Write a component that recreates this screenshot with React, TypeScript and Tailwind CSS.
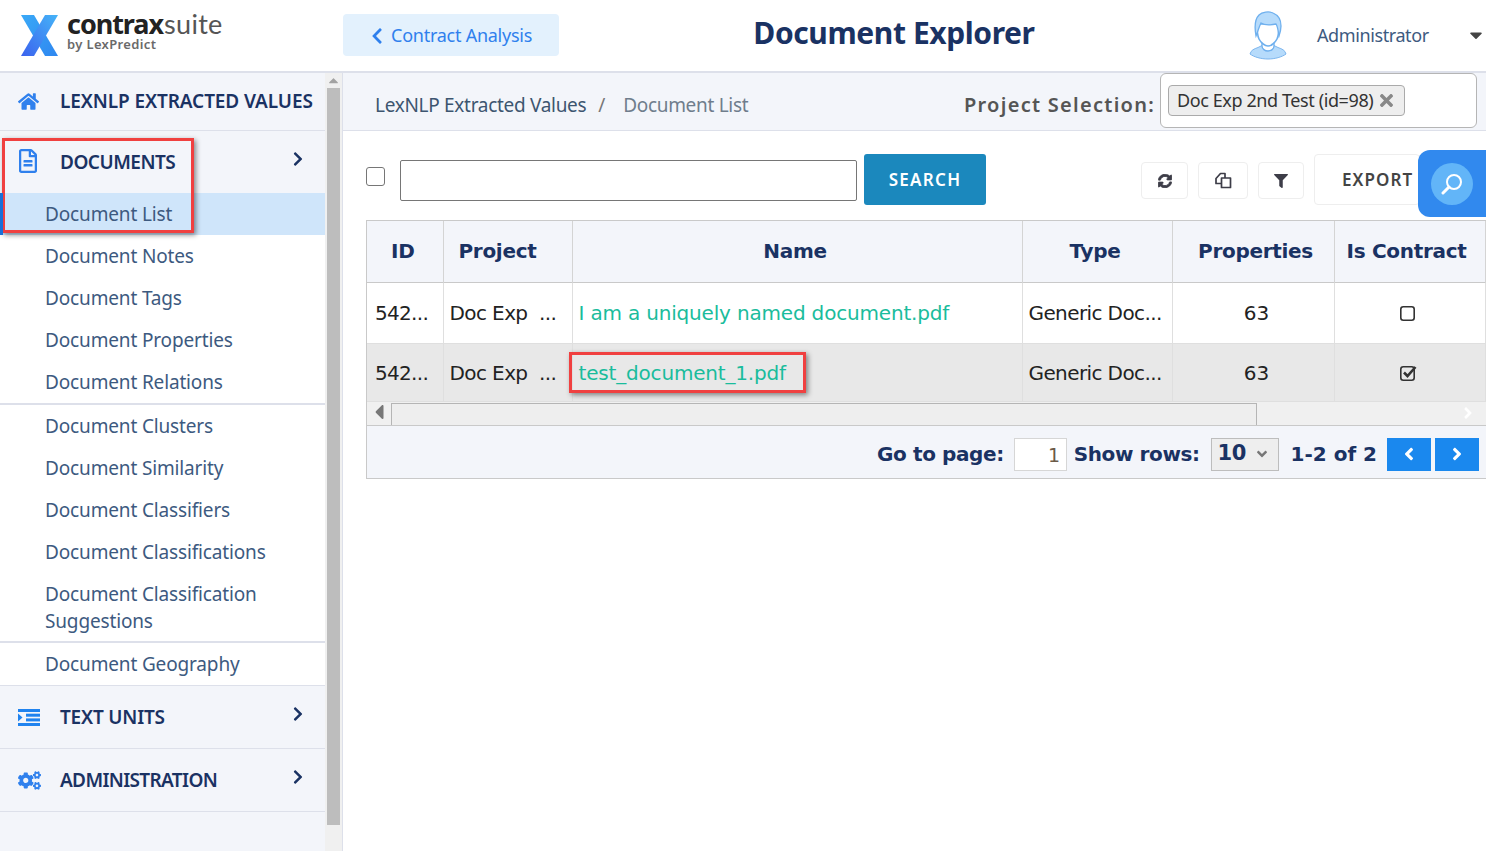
import { FaHome, FaRegFileAlt, FaChevronRight, FaChevronLeft, FaCogs, FaSyncAlt, FaFilter, FaTimes, FaCaretDown, FaCaretLeft, FaCaretUp, FaAngleLeft, FaAngleRight, FaAngleDown } from 'react-icons/fa';

const sideFont = 'font-["Source_Sans_Pro","Noto_Sans",sans-serif]';

function SectionRow({ icon, label, chevron = true, h = 'h-[63px]', tracking }: { icon: React.ReactNode; label: string; chevron?: boolean; h?: string; tracking: string }) {
  return (
    <div className={`${h} flex items-center bg-[#f3f5fa] border-b border-[#dde0ea] pl-[18px] pr-[19px]`}>
      <div className="w-[42px] shrink-0 text-[#2f80ed] text-[21px]">{icon}</div>
      <div className={`flex-1 min-w-0 whitespace-nowrap text-[19px] font-semibold text-[#1a3263] leading-none ${tracking}`}>{label}</div>
      {chevron && <FaChevronRight className="text-[#1a3263] text-[16px] -mt-[6px]" />}
    </div>
  );
}

function SubItem({ label, active, border, tall }: { label: React.ReactNode; active?: boolean; border?: boolean; tall?: boolean }) {
  return (
    <div
      className={`pl-[45px] text-[19px] tracking-[-0.15px] text-[#3d5a80] flex items-center ${tall ? 'h-[70px] pt-[2px] leading-[27px]' : 'h-[42px]'} ${active ? 'bg-[#cfe5fa]' : ''} ${border ? 'border-b-2 border-[#dde0ea]' : ''}`}
    >
      <span>{label}</span>
    </div>
  );
}

function IndentIcon() {
  return (
    <svg width="22" height="17" viewBox="0 0 22 17" fill="#2083ef">
      <rect x="0" y="0" width="22" height="3" />
      <rect x="8" y="4.7" width="14" height="3" />
      <rect x="8" y="9.4" width="14" height="3" />
      <rect x="0" y="14" width="22" height="3" />
      <polygon points="0,4.5 4.5,8.5 0,12.5" />
    </svg>
  );
}

function CopyIcon() {
  return (
    <svg width="17" height="17" viewBox="0 0 17 17" fill="#fff" stroke="#3d3d48" strokeWidth="1.7" strokeLinejoin="round">
      <path d="M1 6.500 5.500 1.500H10V11.500H1z" />
      <path d="M6.500 6H11.500L15.500 6V15.500H6.500z" />
    </svg>
  );
}

function BoxIcon({ checked }: { checked?: boolean }) {
  return (
    <svg width="19" height="18" viewBox="0 0 19 18" fill="none" className="inline-block">
      <rect x="1.800" y="2.800" width="13.400" height="13.400" rx="2.500" stroke="#333" strokeWidth="1.600" />
      {checked && <path d="M5 8.500 8.500 12 16.500 3" stroke="#333" strokeWidth="2.600" />}
    </svg>
  );
}

function Logo() {
  return (
    <div className="flex items-center w-[343px] pl-[21px] shrink-0">
      <svg width="37" height="41" viewBox="0 0 37 41" className="shrink-0">
        <defs>
          <linearGradient id="lg1" x1="0" y1="1" x2="1" y2="0">
            <stop offset="0" stopColor="#3b62ee" />
            <stop offset="1" stopColor="#45b4f8" />
          </linearGradient>
          <linearGradient id="lg2" x1="0" y1="0" x2="1" y2="1">
            <stop offset="0" stopColor="#3aa9f7" />
            <stop offset="1" stopColor="#2f87f0" />
          </linearGradient>
        </defs>
        <polygon points="0,0 13,0 37,41 24,41" fill="url(#lg2)" />
        <polygon points="24,0 37,0 13,41 0,41" fill="url(#lg1)" />
      </svg>
      <div className="ml-[9px] -mt-[7px]">
        <div className="flex items-baseline h-[24px] leading-[24px]">
          <span className="text-[27px] font-bold text-[#222] tracking-[-1.05px]">contrax</span>
          <span className="text-[27px] text-[#555] font-['Lato',sans-serif] tracking-[0.3px] ml-px">suite</span>
        </div>
        <div className="text-[13px] font-semibold text-[#6a6a6a] leading-[15px] tracking-[0.35px] mt-px">by LexPredict</div>
      </div>
    </div>
  );
}

function UserIcon() {
  return (
    <svg width="38" height="49" viewBox="0 0 38 49" className="shrink-0">
      <path d="M1 43c1-4 4-5 8-6.500l4-2h12l4 2c4 1.500 7 2.500 8 6.500-4 3-11 5-18 5S5 46 1 43z" fill="#b6dbfb" stroke="#7db6ee" strokeWidth="1" />
      <path d="M13 31v4c0 3 3 5 6 5s6-2 6-5v-4z" fill="#fff" stroke="#6fb0ee" strokeWidth="1.300" />
      <path d="M8 13c0 8 0 11 2 15 2 4 6 7 9 7s7-3 9-7c2-4 2-7 2-15z" fill="#fff" stroke="#6fb0ee" strokeWidth="1.600" />
      <path d="M7 25C5 14 6 8 10 4c3-3 10-4 14-2 5 2 8 6 8 13 0 4-1 7-2 10-1-5-1-9-3-12-5 1-12 1-15-1-2 4-3 8-5 13z" fill="#b6dbfb" stroke="#6fb0ee" strokeWidth="1.300" />
    </svg>
  );
}

function ToolButton({ children, w }: { children: React.ReactNode; w: string }) {
  return <div className={`${w} h-[37px] border border-[#eeeeee] rounded-[4px] flex items-center justify-center text-[#3d3d48] text-[14px]`}>{children}</div>;
}

const cell = 'border-r border-[#dfdfdf] px-[6px] whitespace-nowrap overflow-hidden';
const th = 'border-r border-[#d4d4d4] text-[#1a3263] font-bold text-[20px] tracking-[-0.3px] text-center';

function Row({ name, checked, bg, h, pad = '' }: { name: string; checked?: boolean; bg: string; h: string; pad?: string }) {
  return (
    <tr className={`${bg} ${h} text-[20px] text-[#222] border-b border-[#dfdfdf]`}>
      <td className={`${cell} ${pad} !pl-[8px] tracking-[-0.7px]`}>542...</td>
      <td className={`${cell} ${pad} tracking-[-0.6px]`}>Doc Exp&nbsp;&nbsp;...</td>
      <td className={`${cell} ${pad} tracking-[-0.18px] text-[#1abc9c]`}>{name}</td>
      <td className={`${cell} ${pad} tracking-[-0.6px]`}>Generic Doc...</td>
      <td className={`${cell} ${pad} pl-[13px] text-center`}>63</td>
      <td className={`${cell} !pr-[9px] pb-[2px] text-center`}>
        <BoxIcon checked={checked} />
      </td>
    </tr>
  );
}

export default function App() {
  return (
    <div className="relative w-[1486px] h-[851px] overflow-hidden bg-white font-['Noto_Sans',sans-serif]">
      {/* header */}
      <header className="h-[73px] flex items-center bg-white border-b-2 border-[#dde0ea]">
        <Logo />
        <div className="w-[216px] h-[42px] -mt-[2px] pt-[2px] bg-[#e3f1fd] rounded-[4px] flex items-center pl-[25px] text-[#2f80ed] text-[18px] tracking-[-0.25px] shrink-0">
          <FaChevronLeft className="text-[18px] mr-[5px]" />
          Contract Analysis
        </div>
        <div className="w-[670px] text-center text-[30px] font-bold text-[#1a3263] leading-none -mt-[5px] tracking-[-0.4px] shrink-0">Document Explorer</div>
        <div className="flex items-center ml-[20px] flex-1">
          <UserIcon />
          <span className="ml-[30px] text-[18px] text-[#3d5a80] tracking-[-0.4px]">Administrator</span>
          <FaCaretDown className="ml-auto -mt-[2px] text-[#444] text-[20px]" />
        </div>
      </header>

      <div className="flex h-[778px]">
        {/* sidebar */}
        <aside className={`w-[325px] shrink-0 flex flex-col ${sideFont}`}>
          <SectionRow icon={<FaHome />} label="LEXNLP EXTRACTED VALUES" chevron={false} h="h-[58px]" tracking="tracking-[-0.1px]" />
          <SectionRow icon={<FaRegFileAlt className="text-[24px] -mt-[2px] -ml-[2px]" />} label="DOCUMENTS" h="h-[62px] !border-b-0" tracking="tracking-[-0.5px]" />
          <SubItem label="Document List" active />
          <SubItem label="Document Notes" />
          <SubItem label="Document Tags" />
          <SubItem label="Document Properties" />
          <SubItem label="Document Relations" />
          <div className="border-b-2 border-[#dde0ea]" />
          <SubItem label="Document Clusters" />
          <SubItem label="Document Similarity" />
          <SubItem label="Document Classifiers" />
          <SubItem label="Document Classifications" />
          <SubItem label={<>Document Classification<br />Suggestions</>} tall border />
          <SubItem label="Document Geography" />
          <div className="border-b border-[#dde0ea]" />
          <SectionRow icon={<IndentIcon />} label="TEXT UNITS" tracking="tracking-[-0.2px]" />
          <SectionRow icon={<FaCogs className="text-[23px]" />} label="ADMINISTRATION" tracking="tracking-[-0.65px]" />
          <div className="flex-1 bg-[#f3f5fa]" />
        </aside>

        {/* sidebar scrollbar */}
        <div className="w-[18px] shrink-0 bg-[#f0f0f0] border-r border-[#dde0ea] flex flex-col items-start pl-[2px]">
          <FaCaretUp className="text-[#a3a3a3] text-[11px] h-[15px] w-[13px]" />
          <div className="w-[13px] h-[737px] bg-[#bdbdbd]" />
        </div>

        {/* content */}
        <main className="flex-1 min-w-0">
          <div className="h-[58px] bg-[#f3f5fa] border-b border-[#dde0ea] flex items-center">
            <div className={`ml-[32px] mt-[7px] text-[19px] tracking-[-0.3px] text-[#3d5570] ${sideFont}`}>
              LexNLP Extracted Values
              <span className="text-[#777] ml-[12px] mr-[18px]">/</span>
              <span className="text-[#6f7d8c]">Document List</span>
            </div>
            <div className={`ml-auto mt-[7px] text-[20px] font-semibold text-[#555] tracking-[1.27px] mr-[5px] ${sideFont}`}>Project Selection:</div>
            <div className="w-[317px] h-[55px] mr-[9px] -mt-[2px] bg-white border border-[#b5b5b5] rounded-[6px] pl-[7px] pt-[11px]">
              <div className={`inline-flex items-center h-[31px] px-[8px] bg-[#eeeeee] border border-[#aaaaaa] rounded-[4px] text-[18px] text-[#333] tracking-[-0.4px] ${sideFont}`}>
                Doc Exp 2nd Test (id=98)
                <FaTimes className="ml-[4px] text-[#888] text-[19px]" />
              </div>
            </div>
          </div>

          <div className="pl-[23px]">
            <div className="h-[89px] flex items-start">
              <input type="checkbox" className="w-[19px] h-[19px] mt-[36px] shrink-0 appearance-none bg-white border border-[#767676] rounded-[3px]" />
              <input className="ml-[15px] mt-[29px] w-[457px] h-[41px] border border-[#767676] rounded-[2px] bg-white" />
              <div className={`ml-[7px] mt-[23px] w-[122px] h-[51px] bg-[#1b88bd] rounded-[3px] text-white flex items-center justify-center text-[17px] font-semibold tracking-[1.3px] ${sideFont}`}>SEARCH</div>
              <div className="ml-auto flex items-start gap-[10px]">
                <div className="mt-[31px] flex gap-[10px]">
                  <ToolButton w="w-[47px]"><FaSyncAlt stroke="currentColor" strokeWidth={30} /></ToolButton>
                  <ToolButton w="w-[50px]"><CopyIcon /></ToolButton>
                  <ToolButton w="w-[46px]"><FaFilter /></ToolButton>
                </div>
                <div className={`mt-[23px] w-[106px] h-[51px] pl-[27px] border border-[#eeeeee] rounded-[4px] flex items-center text-[17px] font-semibold tracking-[1.1px] text-[#444] ${sideFont}`}>EXPORT</div>
                <div className="w-[56px]" />
              </div>
            </div>

            <div className="border border-[#c9c9c9] border-r-0">
              <table className="w-[1118px] table-fixed border-collapse font-['DejaVu_Sans',sans-serif]">
                <colgroup>
                  <col className="w-[76px]" />
                  <col className="w-[129px]" />
                  <col className="w-[450px]" />
                  <col className="w-[150px]" />
                  <col className="w-[162px]" />
                  <col className="w-[151px]" />
                </colgroup>
                <thead>
                  <tr className="h-[61px] bg-[#f3f5fa] border-b border-[#c9c9c9]">
                    <th className={`${th} pr-[4px]`}>ID</th>
                    <th className={`${th} pr-[20px]`}>Project</th>
                    <th className={`${th} pr-[4px]`}>Name</th>
                    <th className={`${th} pr-[4px]`}>Type</th>
                    <th className={`${th} pl-[5px]`}>Properties</th>
                    <th className={`${th} pr-[6px]`}>Is Contract</th>
                  </tr>
                </thead>
                <tbody>
                  <Row name="I am a uniquely named document.pdf" bg="bg-white" h="h-[61px]" />
                  <Row name="test_document_1.pdf" bg="bg-[#e8e8e8]" h="h-[58px]" pad="pt-[2px]" checked />
                </tbody>
              </table>
              <div className="h-[24px] bg-[#f0f0f0] border-b border-[#c9c9c9] flex items-end">
                <FaCaretLeft className="text-[#777] text-[24px] w-[24px] mb-px" />
                <div className="w-[866px] h-[22px] bg-[#eeeeee] border border-[#b5b5b5] border-b-0" />
                <FaAngleRight className="ml-auto mr-[9px] mb-[3px] text-white text-[18px]" />
              </div>
              <div className="h-[52px] pt-[5px] bg-[#f3f5fa] flex items-center justify-end pr-[7px] font-['DejaVu_Sans',sans-serif] font-bold text-[#1a3263] text-[20px] tracking-[-0.4px]">
                <span>Go to page:</span>
                <div className="ml-[10px] w-[53px] h-[33px] bg-white border border-[#d6d6d6] text-right pr-[6px] font-normal text-[#6b5a48] text-[19px] leading-[33px]">1</div>
                <span className="ml-[7px]">Show rows:</span>
                <div className="ml-[11px] w-[68px] h-[33px] bg-[#eeeeee] border border-[#bdbdbd] flex items-center pl-[6px] text-[21px]">
                  10
                  <FaAngleDown className="ml-auto mr-[8px] text-[#777] text-[16px]" />
                </div>
                <span className="ml-[12px] tracking-[0px]">1-2 of 2</span>
                <div className="ml-[10px] w-[44px] h-[33px] bg-[#1a88ee] flex items-center justify-center text-white"><FaAngleLeft /></div>
                <div className="ml-[4px] w-[44px] h-[33px] bg-[#1a88ee] flex items-center justify-center text-white"><FaAngleRight /></div>
              </div>
            </div>
          </div>
        </main>
      </div>

      {/* floating search button */}
      <div className="absolute left-[1418px] top-[150px] w-[68px] h-[67px] bg-[#3189ee] rounded-l-[12px] flex items-center justify-center">
        <div className="w-[42px] h-[42px] rounded-full bg-[#62b5f8] flex items-center justify-center">
          <svg width="22" height="22" viewBox="0 0 22 22" fill="none" stroke="#fff">
            <circle cx="13" cy="9" r="7" strokeWidth="2" />
            <path d="M8 14 2 20" strokeWidth="3" strokeLinecap="round" />
          </svg>
        </div>
      </div>

      {/* annotation boxes */}
      <div className="absolute left-[2px] top-[138px] w-[192px] h-[95px] border-[3px] border-[#f04040] shadow-[2px_2px_5px_rgba(0,0,0,0.45)]" />
      <div className="absolute left-[569px] top-[352px] w-[237px] h-[41px] border-[3px] border-[#f04040] shadow-[2px_2px_5px_rgba(0,0,0,0.45)]" />
      <div className="absolute left-0 top-[193px] w-[3px] h-[42px] bg-[#1a6fd8]" />
    </div>
  );
}
